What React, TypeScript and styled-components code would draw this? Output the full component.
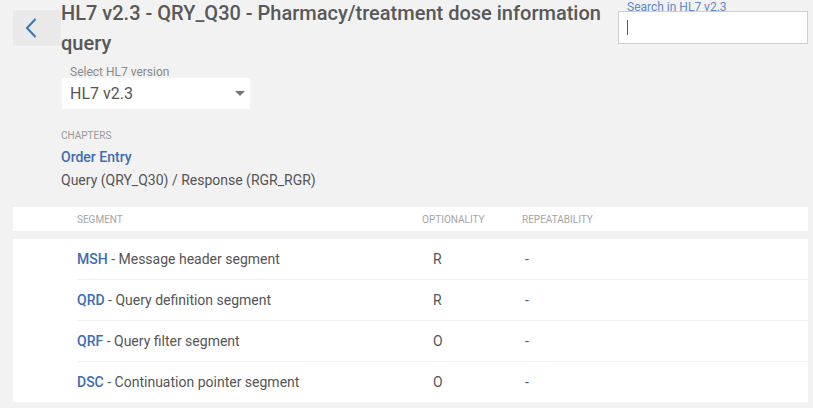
import React from "react";
import styled, { createGlobalStyle } from "styled-components";

const Global = createGlobalStyle`
  html, body { margin: 0; padding: 0; background: #f2f2f2; }
  body { font-family: Roboto, "Noto Sans", Arial, sans-serif; color: #555; }
  * { box-sizing: border-box; }
`;

const Page = styled.div`
  width: 813px;
  height: 408px;
  overflow: hidden;
  padding: 0 5px 0 13px;
`;

const Header = styled.div`
  display: flex;
  align-items: flex-start;
`;

const BackButton = styled.button`
  width: 48px;
  height: 36px;
  margin-top: 10px;
  flex: none;
  border: none;
  border-radius: 3px;
  background: #e9e9e9;
  display: flex;
  align-items: center;
  padding: 0 0 0 11px;
  cursor: pointer;
`;

const Middle = styled.div`
  flex: 1;
  display: flex;
  flex-direction: column;
`;

const Title = styled.h1`
  margin: -2px 0 0;
  width: 550px;
  font-size: 20px;
  font-weight: 500;
  line-height: 30px;
  color: #585858;
`;

const SelectWrap = styled.div`
  margin-top: 7px;
  margin-left: 1px;
  display: flex;
  flex-direction: column;
`;

const SmallLabel = styled.span`
  font-size: 12px;
  line-height: 14px;
  color: #8a8a8a;
  padding-left: 8px;
`;

const SelectBox = styled.div`
  margin-top: -1px;
  width: 188px;
  height: 31px;
  background: #fff;
  display: flex;
  align-items: center;
  justify-content: space-between;
  padding: 0 5px 0 8px;
  font-size: 16px;
  color: #555;
`;

const Chapters = styled.div`
  margin-top: 21px;
  display: flex;
  flex-direction: column;
`;

const Caption = styled.span`
  font-size: 10px;
  line-height: 12px;
  text-transform: uppercase;
  color: #999;
`;

const ChapterLink = styled.a`
  margin-top: 6px;
  font-size: 14px;
  line-height: 18px;
  font-weight: 500;
  color: #3d6db2;
  text-decoration: none;
`;

const MessageName = styled.span`
  margin-top: 5px;
  font-size: 14px;
  line-height: 18px;
  color: #555;
`;

const Search = styled.div`
  width: 190px;
  margin-left: auto;
  display: flex;
  flex-direction: column;
`;

const SearchLabel = styled.label`
  font-size: 12px;
  line-height: 14px;
  color: #5f88c6;
  padding-left: 9px;
`;

const SearchInput = styled.div`
  margin-top: -3px;
  height: 33px;
  background: #fff;
  border: 1px solid #cfcfcf;
  display: flex;
  align-items: center;
  padding-left: 8px;
`;

const Caret = styled.span`
  width: 1px;
  height: 15px;
  background: #3a5f9a;
`;

const TableHead = styled.div`
  margin-top: 18px;
  height: 24px;
  background: #fff;
  display: grid;
  grid-template-columns: 64px 345px 100px 1fr;
  align-items: center;
  font-size: 10px;
  text-transform: uppercase;
  color: #a5a5a5;
`;

const TableBody = styled.div`
  margin-top: 8px;
  background: #fff;
  display: flex;
  flex-direction: column;
  padding-left: 64px;
`;

const Row = styled.div<{ $last?: boolean }>`
  height: ${(p) => (p.$last ? "40px" : "41px")};
  border-bottom: ${(p) => (p.$last ? "none" : "1px solid #efefef")};
  display: grid;
  grid-template-columns: 345px 100px 1fr;
  align-items: center;
  font-size: 14px;
  color: #555;
`;

const Code = styled.span`
  font-weight: 500;
  color: #3d6db2;
`;

const Opt = styled.span`
  padding-left: 11px;
`;

const Rep = styled.span`
  padding-left: 3px;
`;

const segments = [
  { code: "MSH", name: "Message header segment", opt: "R" },
  { code: "QRD", name: "Query definition segment", opt: "R" },
  { code: "QRF", name: "Query filter segment", opt: "O" },
  { code: "DSC", name: "Continuation pointer segment", opt: "O" },
];

export default function App() {
  return (
    <>
      <Global />
      <Page>
        <Header>
          <BackButton aria-label="Back">
            <svg width="14" height="22" viewBox="0 0 14 22">
              <path d="M11.5 2 L3 11 L11.5 20" fill="none" stroke="#3a73c0" strokeWidth="2" />
            </svg>
          </BackButton>
          <Middle>
            <Title>HL7 v2.3 - QRY_Q30 - Pharmacy/treatment dose information query</Title>
            <SelectWrap>
              <SmallLabel>Select HL7 version</SmallLabel>
              <SelectBox>
                <span>HL7 v2.3</span>
                <svg width="10" height="5" viewBox="0 0 10 5">
                  <path d="M0 0 L10 0 L5 5 Z" fill="#757575" />
                </svg>
              </SelectBox>
            </SelectWrap>
            <Chapters>
              <Caption>Chapters</Caption>
              <ChapterLink href="#">Order Entry</ChapterLink>
              <MessageName>Query (QRY_Q30) / Response (RGR_RGR)</MessageName>
            </Chapters>
          </Middle>
          <Search>
            <SearchLabel>Search in HL7 v2.3</SearchLabel>
            <SearchInput>
              <Caret />
            </SearchInput>
          </Search>
        </Header>
        <TableHead>
          <span />
          <span>Segment</span>
          <span>Optionality</span>
          <span>Repeatability</span>
        </TableHead>
        <TableBody>
          {segments.map((s, i) => (
            <Row key={s.code} $last={i === segments.length - 1}>
              <span>
                <Code>{s.code}</Code> - {s.name}
              </span>
              <Opt>{s.opt}</Opt>
              <Rep>-</Rep>
            </Row>
          ))}
        </TableBody>
      </Page>
    </>
  );
}
